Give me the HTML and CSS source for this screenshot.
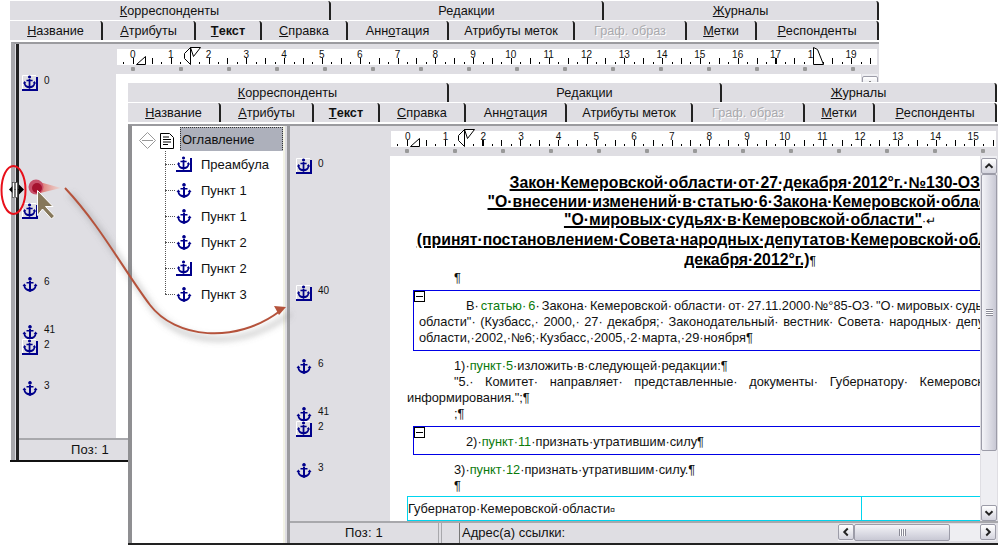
FILE: index.html
```html
<!DOCTYPE html>
<html lang="ru">
<head>
    <meta charset="UTF-8">
    <title>Закон Кемеровской области</title>
    <link rel="stylesheet" href="styles.css">
</head>
<body>

<svg class="icon-defs" width="0" height="0">
    <defs>
        <g id="anchor-shape">
            <path d="M8 1a1.800 1.800 0 1 1-.01 0zM7 5h2v1h2.500v1.600H9v5.400c2 0 3.400-1 3.700-3l-1-.2 2-2.300 1.800 2.600-1 0c-.3 2.800-2.500 4.900-5.500 5.400l-1 .9-1-.9c-3-.5-5.200-2.600-5.500-5.400l-1 0 1.800-2.600 2 2.300-1 .2c.3 2 1.700 3 3.700 3V7.600H4.500V6H7z" fill="#00008b" fill-rule="evenodd"/>
        </g>
    </defs>
    <symbol id="anchor" viewBox="0 0 16 16">
        <use href="#anchor-shape"/>
    </symbol>
    <symbol id="anchor-box" viewBox="0 0 16 16">
        <path d="M.5 14V.5H14" fill="none" stroke="#fff"/>
        <use href="#anchor-shape" transform="translate(.5 -.5) scale(.88)"/>
        <path d="M0 15h16M15 2v14" fill="none" stroke="#00008b" stroke-width="2"/>
    </symbol>
    <symbol id="ruler-marks" viewBox="0 0 90 20">
        <path d="M19.500 17.500l9-8v8zM73.500 .5l-6 6v5l6 6zM73.500 .5h10l-7 9z" fill="#fff" stroke="#000"/>
    </symbol>
    <symbol id="up" viewBox="0 0 16 16"><path d="M4 10l4-4 4 4" fill="none" stroke="#222" stroke-width="2.200"/></symbol>
    <symbol id="down" viewBox="0 0 16 16"><path d="M4 6l4 4 4-4" fill="none" stroke="#222" stroke-width="2.200"/></symbol>
    <symbol id="left" viewBox="0 0 16 16"><path d="M10 4l-4 4 4 4" fill="none" stroke="#222" stroke-width="2.200"/></symbol>
    <symbol id="right" viewBox="0 0 16 16"><path d="M6 4l4 4-4 4" fill="none" stroke="#222" stroke-width="2.200"/></symbol>
</svg>

<div class="desktop">

    <!-- back window, only the left side and the top can be seen -->
    <div class="window window-back">
        <div class="tabs tabs-top">
            <div class="tab"><u>К</u>орреспонденты</div>
            <div class="tab">Ре<u>д</u>акции</div>
            <div class="tab"><u>Ж</u>урналы</div>
        </div>
        <div class="tabs tabs-sub">
            <div class="tab"><u>Н</u>азвание</div>
            <div class="tab"><u>А</u>трибуты</div>
            <div class="tab tab-active"><u>Т</u>екст</div>
            <div class="tab"><u>С</u>правка</div>
            <div class="tab">Анн<u>о</u>тация</div>
            <div class="tab">Атрибуты меток</div>
            <div class="tab tab-off">Граф. образ</div>
            <div class="tab"><u>М</u>етки</div>
            <div class="tab"><u>Р</u>еспонденты</div>
        </div>
        <div class="workspace">
            <div class="split-bar"></div>
            <div class="editor">
                <div class="ruler-row">
                    <div class="ruler-corner"></div>
                    <div class="ruler">
                        <div class="ruler-strip">
                            <div class="ruler-nums">
                                <span>0</span><span>1</span><span>2</span><span>3</span><span>4</span>
                                <span>5</span><span>6</span><span>7</span><span>8</span><span>9</span>
                                <span>10</span><span>11</span><span>12</span><span>13</span><span>14</span>
                                <span>15</span><span>16</span><span>17</span><span>18</span><span>19</span>
                            </div>
                            <svg class="ruler-marks" width="90" height="20"><use href="#ruler-marks"/></svg>
                            <svg class="ruler-end" width="12" height="20"><path d="M.5 .5l4 2 6 15h-10z" fill="#fff" stroke="#000"/></svg>
                        </div>
                        <div class="ruler-dots"></div>
                    </div>
                </div>
                <div class="editor-body">
                    <div class="gutter">
                        <div class="mark" style="top:1px"><svg class="anchor"><use href="#anchor-box"/></svg><span>0</span></div>
                        <div class="mark" style="top:129px"><svg class="anchor"><use href="#anchor-box"/></svg><span></span></div>
                        <div class="mark" style="top:202px"><svg class="anchor"><use href="#anchor"/></svg><span>6</span></div>
                        <div class="mark" style="top:250px"><svg class="anchor"><use href="#anchor"/></svg><span>41</span></div>
                        <div class="mark" style="top:265px"><svg class="anchor"><use href="#anchor-box"/></svg><span>2</span></div>
                        <div class="mark" style="top:306px"><svg class="anchor"><use href="#anchor"/></svg><span>3</span></div>
                    </div>
                    <div class="doc"></div>
                    <div class="vscroll">
                        <div class="sb-btn"><svg><use href="#up"/></svg></div>
                    </div>
                </div>
                <div class="status">
                    <div class="status-pos">Поз: 1</div>
                </div>
            </div>
        </div>
    </div>

    <!-- front window -->
    <div class="window window-front">
        <div class="tabs tabs-top">
            <div class="tab"><u>К</u>орреспонденты</div>
            <div class="tab">Ре<u>д</u>акции</div>
            <div class="tab"><u>Ж</u>урналы</div>
        </div>
        <div class="tabs tabs-sub">
            <div class="tab"><u>Н</u>азвание</div>
            <div class="tab"><u>А</u>трибуты</div>
            <div class="tab tab-active"><u>Т</u>екст</div>
            <div class="tab"><u>С</u>правка</div>
            <div class="tab">Анн<u>о</u>тация</div>
            <div class="tab">Атрибуты меток</div>
            <div class="tab tab-off">Граф. образ</div>
            <div class="tab"><u>М</u>етки</div>
            <div class="tab"><u>Р</u>еспонденты</div>
        </div>
        <div class="workspace">
            <div class="tree">
                <div class="tree-root">
                    <svg class="tree-toggle" width="17" height="17" viewBox="0 0 17 17"><path d="M8.500 .5l8 8-8 8-8-8zM3 8.500h11" fill="#fff" stroke="#999"/></svg>
                    <svg class="tree-doc" width="14" height="16" viewBox="0 0 14 16"><path d="M.5 .5h9l4 4v11H.5z" fill="#fff" stroke="#000"/><path d="M3 4h6M3 6.500h8M3 9h8M3 11.500h5" stroke="#000"/></svg>
                    <div class="tree-title">Оглавление</div>
                </div>
                <ul class="tree-items">
                    <li><svg class="anchor"><use href="#anchor-box"/></svg>Преамбула</li>
                    <li><svg class="anchor"><use href="#anchor"/></svg>Пункт 1</li>
                    <li><svg class="anchor"><use href="#anchor"/></svg>Пункт 1</li>
                    <li><svg class="anchor"><use href="#anchor"/></svg>Пункт 2</li>
                    <li><svg class="anchor"><use href="#anchor-box"/></svg>Пункт 2</li>
                    <li><svg class="anchor"><use href="#anchor"/></svg>Пункт 3</li>
                </ul>
            </div>
            <div class="split-gray"></div>
            <div class="editor">
                <div class="ruler-row">
                    <div class="ruler-corner"></div>
                    <div class="ruler">
                        <div class="ruler-strip">
                            <div class="ruler-nums">
                                <span>0</span><span>1</span><span>2</span><span>3</span><span>4</span>
                                <span>5</span><span>6</span><span>7</span><span>8</span><span>9</span>
                                <span>10</span><span>11</span><span>12</span><span>13</span><span>14</span>
                                <span>15</span>
                            </div>
                            <svg class="ruler-marks" width="90" height="20"><use href="#ruler-marks"/></svg>
                        </div>
                        <div class="ruler-dots"></div>
                    </div>
                </div>
                <div class="editor-body">
                    <div class="gutter">
                        <div class="mark" style="top:2px"><svg class="anchor"><use href="#anchor-box"/></svg><span>0</span></div>
                        <div class="mark" style="top:129px"><svg class="anchor"><use href="#anchor-box"/></svg><span>40</span></div>
                        <div class="mark" style="top:202px"><svg class="anchor"><use href="#anchor"/></svg><span>6</span></div>
                        <div class="mark" style="top:250px"><svg class="anchor"><use href="#anchor"/></svg><span>41</span></div>
                        <div class="mark" style="top:265px"><svg class="anchor"><use href="#anchor-box"/></svg><span>2</span></div>
                        <div class="mark" style="top:306px"><svg class="anchor"><use href="#anchor"/></svg><span>3</span></div>
                    </div>
                    <div class="doc">
                        <div class="doc-title">
                            <div>Закон·Кемеровской·области·от·27·декабря·2012°г.·№130-ОЗ··</div>
                            <div>"О·внесении·изменений·в·статью·6·Закона·Кемеровской·области"</div>
                            <div>"О·мировых·судьях·в·Кемеровской·области"<i>·↵</i></div>
                            <div>(принят·постановлением·Совета·народных·депутатов·Кемеровской·области·от·20·<i>↵</i></div>
                            <div>декабря·2012°г.)<i>¶</i></div>
                        </div>
                        <p class="line line-indent title-end">¶</p>
                        <div class="change-box change-first">
                            <span class="box-toggle"></span>
                            <p class="line line-lead">В· <b>статью· 6</b>· Закона· Кемеровской· области· от· 27.11.2000·№°85-ОЗ· "О· мировых· судьях· в</p>
                            <p class="line line-body">области"· (Кузбасс,· 2000,· 27· декабря;· Законодательный· вестник· Совета· народных· депутатов· Кемеровской</p>
                            <p class="line line-body">области,·2002,·№6;·Кузбасс,·2005,·2·марта,·29·ноября¶</p>
                        </div>
                        <p class="line line-indent after-box">1)·<b>пункт·5</b>·изложить·в·следующей·редакции:¶</p>
                        <p class="line line-indent line-wide">"5.· Комитет· направляет· представленные· документы· Губернатору· Кемеровской· области</p>
                        <p class="line line-flush">информирования.";¶</p>
                        <p class="line line-indent">;¶</p>
                        <div class="change-box change-second">
                            <span class="box-toggle"></span>
                            <p class="line line-lead">2)·<b>пункт·11</b>·признать·утратившим·силу¶</p>
                        </div>
                        <p class="line line-indent after-second">3)·<b>пункт·12</b>·признать·утратившим·силу.¶</p>
                        <p class="line line-indent">¶</p>
                        <div class="sign-table">
                            <div class="sign-cell">Губернатор·Кемеровской·области<small>¤</small></div>
                            <div class="sign-cell"></div>
                        </div>
                    </div>
                    <div class="vscroll">
                        <div class="sb-btn"><svg><use href="#up"/></svg></div>
                        <div class="sb-thumb-v"><span></span></div>
                        <div class="sb-track"></div>
                        <div class="sb-btn"><svg><use href="#down"/></svg></div>
                    </div>
                </div>
                <div class="status">
                    <div class="status-pos">Поз: 1</div>
                    <div class="status-cell"></div>
                    <div class="status-addr">Адрес(а) ссылки:</div>
                    <div class="hscroll">
                        <div class="sb-btn"><svg><use href="#left"/></svg></div>
                        <div class="sb-thumb-h"><span></span></div>
                        <div class="sb-track"></div>
                        <div class="sb-btn"><svg><use href="#right"/></svg></div>
                    </div>
                </div>
            </div>
        </div>
    </div>

    <!-- callout drawn on top of both windows -->
    <svg class="callout" width="998" height="545" viewBox="0 0 998 545">
        <defs>
            <filter id="soft" x="-20%" y="-20%" width="140%" height="140%"><feGaussianBlur stdDeviation="3"/></filter>
            <linearGradient id="cone" x1="0" x2="1" y1="0" y2="0">
                <stop offset="0" stop-color="#d9534f"/>
                <stop offset="1" stop-color="#f4c9bd" stop-opacity=".5"/>
            </linearGradient>
        </defs>
        <path d="M70 194C105 231 130 278 155 311C180 344 240 351 290 314" fill="none" stroke="#777" stroke-opacity=".45" stroke-width="4" filter="url(#soft)"/>
        <path d="M65 188C100 225 125 272 150 305C175 338 235 345 280 311" fill="none" stroke="#b5533c" stroke-width="2"/>
        <path d="M286 307l-12-1 5 9z" fill="#b5533c"/>
        <ellipse cx="13.500" cy="190" rx="12" ry="24" fill="none" stroke="#e8101a" stroke-width="2"/>
        <path d="M9 189.500l4-4v8zM24 189.500l-5-5v10z" fill="#000"/>
        <path d="M12 189.500h8" stroke="#000"/>
        <rect x="12.500" y="182.500" width="2" height="15" fill="#fff" stroke="#333" stroke-width=".6"/>
        <rect x="15.500" y="182.500" width="2" height="15" fill="#fff" stroke="#333" stroke-width=".6"/>
        <path d="M36 181l25 7-25 6z" fill="url(#cone)"/>
        <circle cx="36" cy="187" r="7.500" fill="#c8506a"/>
        <circle cx="37" cy="188" r="5" fill="#a5122f"/>
        <path d="M37.500 190.500v25l5-6.500 9 10 3-3-9-9.500h7.500z" fill="#86775a" stroke="#fff"/>
    </svg>
</div>

</body>
</html>
```
FILE: styles.css
```css
body {
    margin: 0;
    background-color: #fff;
    font-family: "Liberation Sans", Arial, sans-serif;
    font-size: 13px;
    color: #111;
}

.icon-defs {
    position: absolute;
}

.desktop {
    position: relative;
    width: 998px;
    height: 545px;
    overflow: hidden;
}

.window {
    position: absolute;
    display: flex;
    flex-direction: column;
    box-sizing: border-box;
    background-color: #fff;
}

.window-back {
    left: 10px;
    top: 0;
    width: 869px;
    height: 462px;
    border-bottom: 2px solid #111;
}

.window-front {
    left: 128px;
    top: 82px;
    width: 870px;
    height: 463px;
    border-bottom: 2px solid #222;
}

/* tabs */
.tabs {
    display: grid;
    flex: none;
    height: 20px;
}

.tabs-top {
    padding-top: 1px;
    grid-template-columns: 321px 273px 275px;
}

.tabs-sub {
    grid-template-columns: 93px 93px 66px 86px 101px 126px 112px 70px 122px;
}

.tab {
    display: flex;
    align-items: center;
    justify-content: center;
    box-sizing: border-box;
    height: 19px;
    background-color: #dfdee3;
    border-right: 2px solid #222;
    border-top-right-radius: 3px;
    font-size: 12.700px;
    padding-top: 1px;
}

.tab u {
    text-underline-offset: 1px;
}

.tab-active {
    font-weight: bold;
}

.tab-off {
    color: #a9a9ad;
    text-shadow: 1px 1px 0 #fff;
}

/* main area under tabs */
.workspace {
    display: flex;
    flex: 1;
    min-height: 0;
    margin-top: 1px;
    border-top: 2px solid #9b9b9f;
    border-left: 4px solid #8f8f92;
    background-color: #dfdee3;
}

.window-back .workspace {
    margin-left: 1px;
    border-left: 4px solid #a8a8ac;
}

.split-bar {
    flex: none;
    width: 3px;
    margin-left: 1px;
    background-color: #222;
}

.split-gray {
    flex: none;
    width: 3px;
    margin-left: 2px;
    background-color: #9b9b9f;
}

.editor {
    display: flex;
    flex: 1;
    flex-direction: column;
    min-width: 0;
}

.ruler-row {
    display: flex;
    flex: none;
    height: 30px;
}

.ruler-corner {
    flex: none;
    width: 98px;
}

.window-front .ruler-corner {
    width: 101px;
}

.ruler {
    flex: 1;
    padding-top: 5px;
    padding-right: 2px;
}

.ruler-strip {
    position: relative;
    display: flex;
    height: 16px;
    background-color: #fff;
    background-image:
        repeating-linear-gradient(90deg, #000 0 1px, transparent 1px 18.900px),
        repeating-linear-gradient(90deg, #000 0 1px, transparent 1px 9.450px);
    background-size: 900px 6px, 900px 2px;
    background-position: -3px 9px, -3px 13px;
    background-repeat: no-repeat;
}

.ruler-nums {
    display: flex;
    margin-left: -3px;
    height: 10px;
}

.window-front .ruler-nums {
    margin-left: -2px;
}

.ruler-nums span {
    flex: none;
    width: 37.800px;
    text-align: center;
    font-size: 10px;
    line-height: 11px;
}

.window-front .ruler-nums span {
    width: 37.700px;
}

.ruler-marks {
    position: absolute;
    left: 0;
    top: -2px;
}

.ruler-end {
    position: absolute;
    left: 696px;
    top: -2px;
}

.ruler-dots {
    height: 8px;
    margin-right: -2px;
    background-image: radial-gradient(circle, #999 2px, transparent 2.500px);
    background-size: 48px 8px;
    background-position: -8px 0;
}

.editor-body {
    display: flex;
    flex: 1;
    min-height: 0;
}

.gutter {
    position: relative;
    flex: none;
    width: 97px;
    background-color: #dfdee3;
}

.window-front .gutter {
    width: 100px;
}

.mark {
    position: absolute;
    left: 3px;
    display: flex;
    align-items: flex-start;
    gap: 6px;
}

.window-front .mark {
    left: 6px;
}

.mark span {
    font-size: 10px;
    line-height: 10px;
    margin-top: 1px;
}

.anchor {
    display: block;
    flex: none;
    width: 16px;
    height: 16px;
}

/* document */
.doc {
    flex: 1;
    min-width: 0;
    overflow: hidden;
    background-color: #fff;
    padding-top: 18px;
    box-sizing: border-box;
}

.doc-title {
    width: 720px;
    font-size: 15.800px;
    font-weight: bold;
    line-height: 18.700px;
    text-align: center;
    text-decoration: underline;
    text-decoration-thickness: 2px;
    text-underline-offset: 1px;
    white-space: nowrap;
    color: #000;
}

.doc-title i {
    display: inline-block;
    font-style: normal;
    font-weight: normal;
    font-size: 12px;
    text-decoration: none;
}

.line {
    margin: 0;
    font-size: 12.800px;
    line-height: 16px;
    white-space: nowrap;
    color: #111;
}

.line b {
    font-weight: normal;
    color: #0a7a0a;
}

.line-indent {
    padding-left: 64px;
}

.line-flush {
    padding-left: 17px;
}

.line-wide {
    word-spacing: 8px;
}

.title-end {
    margin-top: -1px;
}

.change-box {
    position: relative;
    box-sizing: border-box;
    width: 700px;
    margin-left: 23px;
    border: 1px solid #0000e6;
}

.change-first {
    height: 61px;
    margin-top: 4px;
    padding-top: 7px;
}

.change-second {
    height: 29px;
    margin-top: 4px;
    padding-top: 7px;
}

.box-toggle {
    position: absolute;
    left: 0;
    top: 0;
    box-sizing: border-box;
    width: 11px;
    height: 11px;
    border: 1px solid #000;
    background: linear-gradient(#000, #000) center / 7px 1px no-repeat;
}

.line-lead {
    padding-left: 52px;
    word-spacing: -1.500px;
}

.line-body {
    padding-left: 5px;
    word-spacing: 1px;
}

.after-box {
    margin-top: 7px;
}

.after-second {
    margin-top: 7px;
}

.sign-table {
    display: flex;
    box-sizing: border-box;
    width: 700px;
    height: 25px;
    margin-top: 2px;
    margin-left: 17px;
    border: 1px solid #00d5ef;
    font-size: 12.800px;
    line-height: 23px;
}

.sign-cell {
    flex: none;
    box-sizing: border-box;
    width: 454px;
    border-right: 1px solid #00d5ef;
    white-space: nowrap;
}

.sign-cell small {
    font-size: 9px;
}

/* scrollbars */
.vscroll {
    display: flex;
    flex: none;
    flex-direction: column;
    width: 16px;
    margin-left: 1px;
    margin-right: 1px;
    padding-top: 2px;
    background-color: #eeeef2;
}

.hscroll {
    display: flex;
    flex: none;
    width: 158px;
    height: 17px;
    margin-left: auto;
    margin-right: 2px;
    margin-top: 1px;
    background-color: #eeeef2;
}

.sb-btn {
    flex: none;
    box-sizing: border-box;
    width: 16px;
    height: 16px;
    border: 1px solid #9c9ca8;
    border-radius: 2px;
    background: linear-gradient(#fff, #d4d4de);
}

.sb-btn svg {
    display: block;
    width: 14px;
    height: 14px;
}

.sb-thumb-v {
    display: flex;
    align-items: center;
    justify-content: center;
    flex: none;
    box-sizing: border-box;
    height: 277px;
    border: 1px solid #9c9ca8;
    border-radius: 2px;
    background: linear-gradient(90deg, #f4f4f8, #c8c8d4);
}

.sb-thumb-v span {
    width: 7px;
    height: 7px;
    background: repeating-linear-gradient(#8a8a96 0 1px, #fff 1px 2px);
}

.sb-thumb-h {
    display: flex;
    align-items: center;
    justify-content: center;
    flex: none;
    box-sizing: border-box;
    width: 96px;
    border: 1px solid #9c9ca8;
    border-radius: 2px;
    background: linear-gradient(#f4f4f8, #c8c8d4);
}

.sb-thumb-h span {
    width: 7px;
    height: 7px;
    background: repeating-linear-gradient(90deg, #8a8a96 0 1px, #fff 1px 2px);
}

.sb-track {
    flex: 1;
}

/* status line */
.status {
    display: flex;
    flex: none;
    height: 20px;
    border-top: 2px solid #a8a8ac;
    background-color: #dfdee3;
    line-height: 20px;
}

.status-pos {
    flex: none;
    box-sizing: border-box;
    width: 149px;
    padding-left: 55px;
    border-right: 1px solid #a8a8ac;
    letter-spacing: .2px;
}

.window-back .status-pos {
    padding-left: 52px;
}

.status-cell {
    flex: none;
    width: 17px;
    margin-left: 2px;
    border-left: 1px solid #a8a8ac;
    border-right: 1px solid #777;
}

.status-addr {
    padding-left: 2px;
}

/* contents tree */
.tree {
    flex: none;
    width: 153px;
    background-color: #fff;
    border-right: 2px solid #f3f3e6;
    box-sizing: border-box;
}

.tree-root {
    display: flex;
    align-items: center;
    height: 27px;
    padding-left: 7px;
    margin-top: 1px;
}

.tree-toggle {
    flex: none;
    margin-right: 4px;
}

.tree-doc {
    flex: none;
    margin-right: 6px;
}

.tree-title {
    flex: 1;
    align-self: stretch;
    line-height: 24px;
    padding-left: 1px;
    background-color: #adb0bb;
    border: 1px dotted #333;
}

.tree-items {
    position: relative;
    list-style: none;
    margin: -3px 0 0 33px;
    padding: 0;
    background-color: #fff;
}

.tree-items::before {
    content: "";
    position: absolute;
    left: 0;
    top: 0;
    bottom: 13px;
    border-left: 1px dotted #555;
}

.tree-items li {
    display: flex;
    align-items: center;
    height: 26px;
}

.tree-items li::before {
    content: "";
    flex: none;
    width: 10px;
    margin-right: 1px;
    border-top: 1px dotted #555;
}

.tree-items li .anchor {
    margin-right: 9px;
}

/* callout */
.callout {
    position: absolute;
    left: 0;
    top: 0;
    pointer-events: none;
}
```
